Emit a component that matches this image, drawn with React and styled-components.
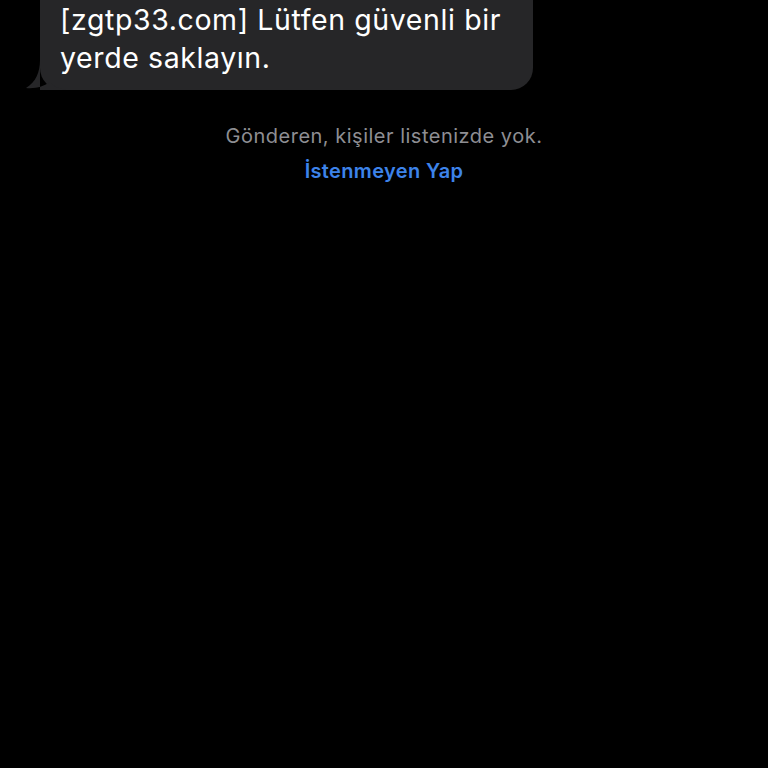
import React from "react";
import styled, { createGlobalStyle } from "styled-components";

const Global = createGlobalStyle`
  html, body { margin: 0; padding: 0; background: #000; }
  body { font-family: Inter, "Noto Sans", sans-serif; -webkit-font-smoothing: antialiased; }
`;

const Screen = styled.div`
  width: 768px;
  height: 768px;
  background: #000;
  display: flex;
  flex-direction: column;
  overflow: hidden;
`;

const Row = styled.div`
  display: flex;
  padding-left: 40px;
`;

const Bubble = styled.div`
  position: relative;
  width: 493px;
  box-sizing: border-box;
  background: #262628;
  color: #fff;
  font-size: 28.5px;
  letter-spacing: 0.6px;
  line-height: 38px;
  padding: 1px 20px 13px 20px;
  border-radius: 0 0 22px 22px;
`;

const Tail = styled.svg`
  position: absolute;
  left: -14px;
  bottom: 0;
  width: 40px;
  height: 30px;
`;

const Notice = styled.div`
  margin-top: 34px;
  display: flex;
  flex-direction: column;
  align-items: center;
  gap: 11px;
`;

const Info = styled.div`
  color: #8e8e93;
  font-size: 20px;
  letter-spacing: 0.5px;
  line-height: 24px;
`;

const Action = styled.button`
  background: none;
  border: none;
  padding: 0;
  color: #3d83ea;
  font-family: inherit;
  font-size: 20px;
  letter-spacing: 0.35px;
  font-weight: 600;
  line-height: 24px;
  cursor: pointer;
`;

export default function App() {
  return (
    <Screen>
      <Global />
      <Row>
        <Bubble>
          [zgtp33.com] Lütfen güvenli bir yerde saklayın.
          <Tail viewBox="0 0 40 30">
            <path d="M14 0 C14 12 10 22 0 28 C10 29 18 26 24 22 C28 27 34 29 40 30 L14 30 Z" fill="#262628" />
          </Tail>
        </Bubble>
      </Row>
      <Notice>
        <Info>Gönderen, kişiler listenizde yok.</Info>
        <Action>İstenmeyen Yap</Action>
      </Notice>
    </Screen>
  );
}
